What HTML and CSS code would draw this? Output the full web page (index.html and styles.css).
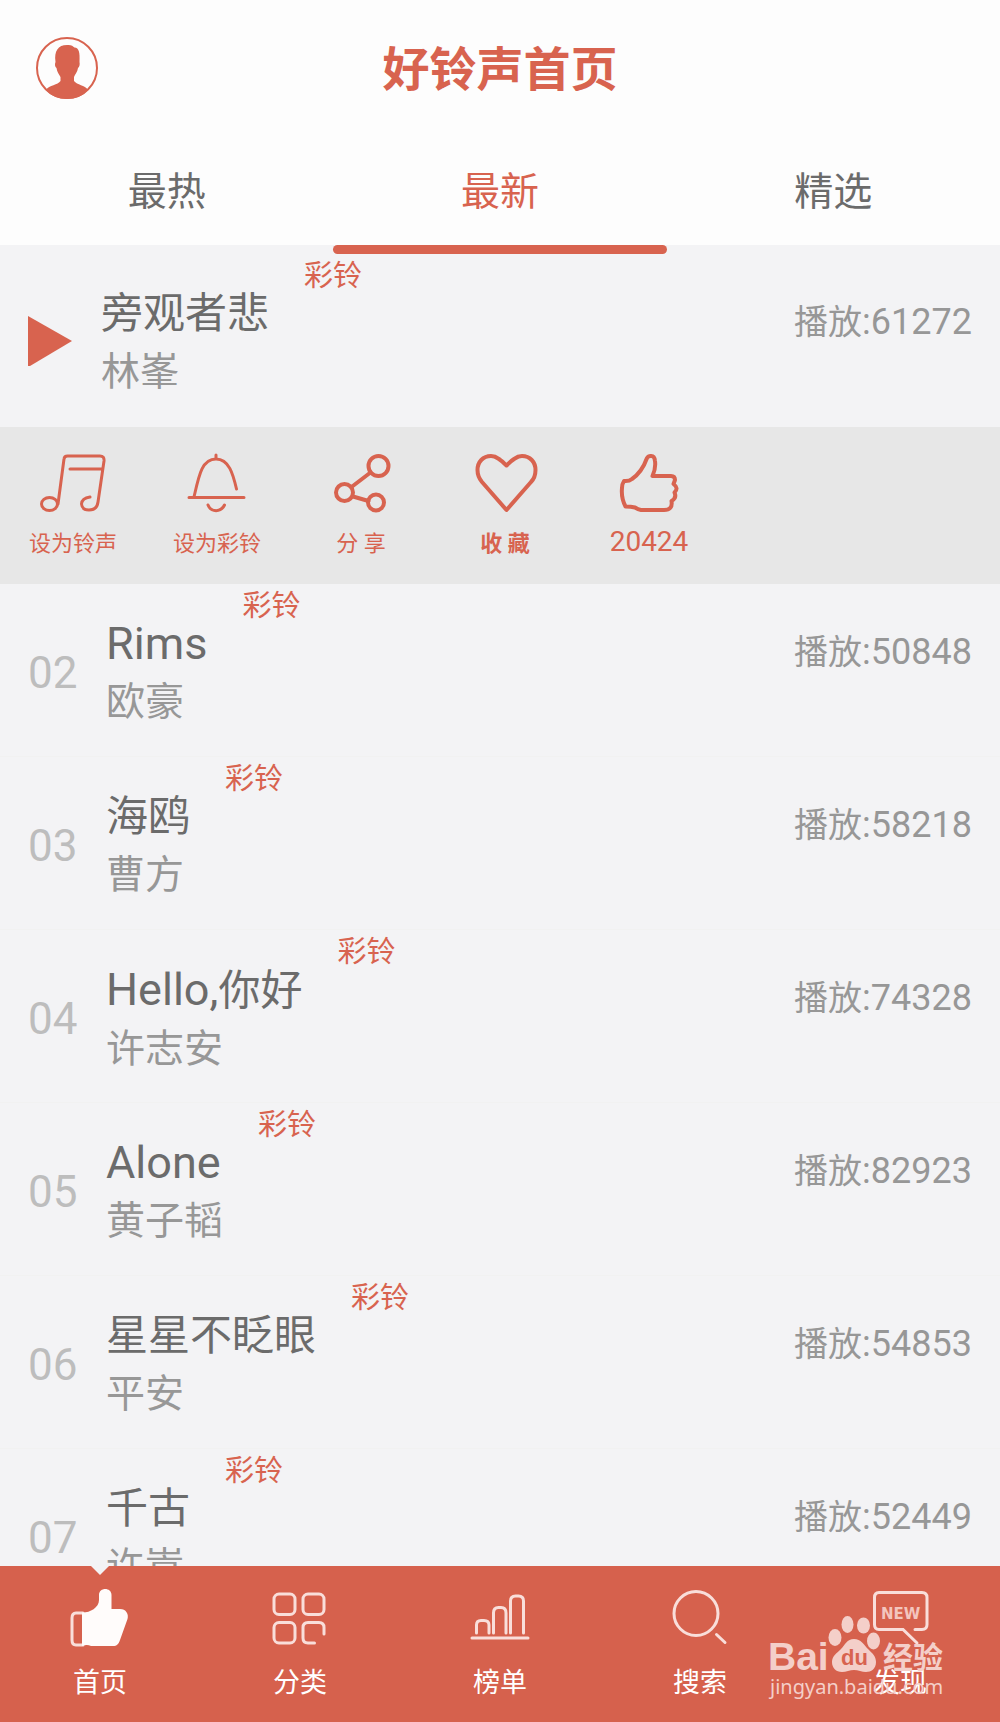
FILE: index.html
```html
<!DOCTYPE html>
<html lang="zh-CN">
<head>
<meta charset="utf-8">
<meta name="viewport" content="width=device-width, initial-scale=1">
<title>好铃声首页</title>
<link rel="stylesheet" href="styles.css">
</head>
<body>
<div class="app">
  <header class="header">
    <button class="avatar" type="button" aria-label="个人中心">
      <svg width="64" height="64" viewBox="0 0 64 64">
        <circle cx="32" cy="32" r="30" fill="none" stroke="currentColor" stroke-width="2"/>
        <path fill="currentColor" d="M32 9C36 8.500 38 10 39.500 11.500C44 12 45 16 44.500 26C45 28 44.500 31 43 32C42.500 36 40 38 39 41V45C42 49 50 49 53 54C48 60 40 63 32 63S16 60 11 54C14 49 23 49 25.500 45V41C24 38 22 36 21.500 32C20 31 19.500 28 20.500 26C19 15 23 9 32 9Z"/>
      </svg>
    </button>
    <h1 class="title">好铃声首页</h1>
  </header>
  <nav class="tabs">
    <a class="tab" href="#hot">最热</a>
    <a class="tab tab-active" href="#new">最新</a>
    <a class="tab" href="#best">精选</a>
  </nav>

  <main class="list">
    <article class="song song-open">
      <button class="play" type="button" aria-label="播放">
        <svg width="44" height="50" viewBox="0 0 44 50"><path fill="currentColor" d="M0 0L44 25L2 50H0Z"/></svg>
      </button>
      <div class="info"><h2 class="name">旁观者悲</h2><p class="singer">林峯</p></div>
      <span class="tag">彩铃</span>
      <span class="plays">播放<span class="count">:61272</span></span>
    </article>

    <div class="actions">
      <button class="action" type="button">
        <svg width="72" height="64" viewBox="0 0 72 64"><ellipse cx="12.500" cy="52" rx="8" ry="6.500"/><path d="M21 52L27 7Q27.300 4 30.500 4H63Q67.500 4 67 9L61 50Q60 58 52 58Q45 58 44.500 52Q45 46 53 45M33 17H65"/></svg>
        <span class="caption">设为铃声</span>
      </button>
      <button class="action" type="button">
        <svg width="72" height="64" viewBox="0 0 72 64"><path d="M13 45C18 23 21 7 35 7C48 7 52 22 55.500 37M8 45.500H63M27 53C30 60.500 40 60.500 43.500 53M35 3V7"/></svg>
        <span class="caption">设为彩铃</span>
      </button>
      <button class="action" type="button">
        <svg class="bold-icon" width="72" height="64" viewBox="0 0 72 64"><circle cx="53.500" cy="14" r="10"/><circle cx="19.500" cy="40.500" r="8.500"/><circle cx="51" cy="50.500" r="8"/><path d="M26.500 35L45.500 20.500M28 44.500L43.500 49"/></svg>
        <span class="caption">分 享</span>
      </button>
      <button class="action" type="button">
        <svg class="bold-icon" width="72" height="64" viewBox="0 0 72 64"><path d="M37.500 13.500C33 9 28 4 22 4C14 4 8.500 10 8.500 18C8.500 23 10.500 27 13 30L37.500 58L62 30C65 27 66.500 23 66.500 18C66.500 10 61 4 53 4C47 4 42 9 37.500 13.500Z"/></svg>
        <span class="caption caption-strong">收 藏</span>
      </button>
      <button class="action" type="button">
        <svg class="bold-icon" width="72" height="64" viewBox="0 0 72 64"><path d="M11 29Q16 29.500 19 27Q29 20 34 6Q35.500 3.500 38.500 4Q41.500 4 42 9Q43 16 39.500 24H58Q62 24 62 28L60.500 32Q66 36 61.500 40.500Q64 46 58.500 49Q60 58 51 58H28Q25 57.500 22 55.500Q18 54.500 12.500 54.500Q8 46 9 36Q9 32 11 29Z"/></svg>
        <span class="likes">20424</span>
      </button>
    </div>

    <article class="song">
      <span class="rank">02</span>
      <div class="info"><h2 class="name name-latin">Rims</h2><p class="singer">欧豪</p></div>
      <span class="tag">彩铃</span>
      <span class="plays">播放<span class="count">:50848</span></span>
    </article>
    <article class="song">
      <span class="rank">03</span>
      <div class="info"><h2 class="name">海鸥</h2><p class="singer">曹方</p></div>
      <span class="tag">彩铃</span>
      <span class="plays">播放<span class="count">:58218</span></span>
    </article>
    <article class="song">
      <span class="rank">04</span>
      <div class="info"><h2 class="name"><span class="name-latin">Hello,</span>你好</h2><p class="singer">许志安</p></div>
      <span class="tag">彩铃</span>
      <span class="plays">播放<span class="count">:74328</span></span>
    </article>
    <article class="song">
      <span class="rank">05</span>
      <div class="info"><h2 class="name name-latin">Alone</h2><p class="singer">黄子韬</p></div>
      <span class="tag">彩铃</span>
      <span class="plays">播放<span class="count">:82923</span></span>
    </article>
    <article class="song">
      <span class="rank">06</span>
      <div class="info"><h2 class="name">星星不眨眼</h2><p class="singer">平安</p></div>
      <span class="tag">彩铃</span>
      <span class="plays">播放<span class="count">:54853</span></span>
    </article>
    <article class="song">
      <span class="rank">07</span>
      <div class="info"><h2 class="name">千古</h2><p class="singer">许嵩</p></div>
      <span class="tag">彩铃</span>
      <span class="plays">播放<span class="count">:52449</span></span>
    </article>
  </main>

  <nav class="bottom">
    <a class="item item-active" href="#home">
      <svg width="72" height="64" viewBox="0 0 72 64"><path d="M19 29H12Q8 29 8 34V56Q8 61 12 61H19"/><path class="solid" d="M18 28.500C25 29 35 24 35 16V11C35 3 47.500 3 47.500 11V25H56C62 25 65 30 63.500 35L56 56C54.500 60 53 62 49 62H27Q23 60 18 62Z"/></svg>
      <span>首页</span>
    </a>
    <a class="item" href="#category">
      <svg width="72" height="64" viewBox="0 0 72 64"><rect x="10" y="10" width="21" height="20.500" rx="5"/><rect x="39" y="10" width="21" height="20.500" rx="5"/><rect x="10" y="38.500" width="21" height="20.500" rx="5"/><path d="M60 50V43.500Q60 38.500 55 38.500H44Q39 38.500 39 43.500V54Q39 59 44 59H50.500"/></svg>
      <span>分类</span>
    </a>
    <a class="item" href="#rank">
      <svg width="72" height="64" viewBox="0 0 72 64"><path d="M8 54H64M12.500 49V41Q12.500 36.500 17 36.500H20Q25 36.500 25 41V49M29.500 49V29Q29.500 23.500 34.500 23.500H37Q42 23.500 42 29V49M46.500 49V17Q46.500 12 51.500 12H54.500Q59.500 12 59.500 17V49"/></svg>
      <span>榜单</span>
    </a>
    <a class="item" href="#search">
      <svg width="72" height="64" viewBox="0 0 72 64"><circle cx="32" cy="29.500" r="22"/><path d="M52.500 50.500L61 58.500"/></svg>
      <span>搜索</span>
    </a>
    <a class="item" href="#discover">
      <svg width="72" height="64" viewBox="0 0 72 64"><path d="M51 45.500H58Q63 45.500 63 40.500V13.500Q63 8.500 58 8.500H15Q10.500 8.500 10.500 13.500V40.500Q10.500 45.500 15 45.500H39L53 59"/><text class="new-text" x="17" y="35">NEW</text></svg>
      <span>发现</span>
    </a>
    <svg class="watermark" width="190" height="92" viewBox="0 0 190 92">
      <text class="wm-bai" x="0" y="58">Bai</text>
      <ellipse cx="67" cy="25.500" rx="6.500" ry="8.500"/>
      <ellipse cx="79.500" cy="12.500" rx="6" ry="8.500"/>
      <ellipse cx="95.500" cy="13.500" rx="6.500" ry="8"/>
      <ellipse cx="105.500" cy="29" rx="6.500" ry="8.500"/>
      <path d="M86 27C93 27 96 33 100 37C104 41 108 44 108 50C108 57 103 60 98 60C94 60 90 58 86 58S78 60 74 60C68 60 64 56 64 50C64 44 69 41 73 37C77 33 79 27 86 27Z"/>
      <text class="wm-du" x="73" y="53">du</text>
      <text class="wm-cn" x="115" y="56">经验</text>
      <text class="wm-url" x="2" y="82">jingyan.baidu.com</text>
    </svg>
  </nav>
</div>
</body>
</html>
```
FILE: styles.css
```css
:root {
  --accent: #d8634f;
  --page: #f3f3f5;
}

* {
  box-sizing: border-box;
  margin: 0;
  padding: 0;
}

body {
  background: var(--page);
  font-family: Roboto, "Noto Sans CJK SC", sans-serif;
  color: #6b6b6b;
}

button {
  border: 0;
  background: none;
  color: var(--accent);
  font: inherit;
}

a {
  color: inherit;
  text-decoration: none;
}

svg {
  display: block;
}

.app {
  display: flex;
  flex-direction: column;
  height: 100vh;
}

.header {
  display: grid;
  grid-template-columns: 64px 1fr 64px;
  align-items: center;
  padding: 0 35px;
  height: 136px;
  background: #fdfdfd;
}

.title {
  padding-top: 3px;
  color: var(--accent);
  font-size: 47px;
  font-weight: 700;
  line-height: 60px;
  text-align: center;
}

.tabs {
  display: flex;
  height: 118px;
  background: linear-gradient(#fdfdfd 109px, var(--page) 109px);
}

.tab {
  flex: 1;
  border-bottom: 9px solid transparent;
  font-size: 39px;
  line-height: 112px;
  text-align: center;
}

.tab-active {
  position: relative;
  color: var(--accent);
}

.tab-active::after {
  content: "";
  position: absolute;
  right: 0;
  bottom: -9px;
  left: 0;
  height: 9px;
  border-radius: 5px;
  background: var(--accent);
}

.list {
  flex: 1;
  min-height: 0;
  overflow-y: auto;
  scrollbar-width: none;
}

.song {
  display: flex;
  align-items: flex-start;
  height: 173px;
  padding: 0 28px;
  border-bottom: 1px solid #f1f1f1;
}

.song-open {
  border-bottom: 0;
}

.rank,
.play {
  flex: none;
  align-self: center;
  width: 78px;
}

.play {
  width: 73px;
}

.rank {
  padding-top: 6px;
  color: #bdbdbd;
  font-size: 44px;
}

.info {
  padding-top: 31px;
}

.name {
  font-size: 42px;
  font-weight: 400;
  line-height: 58px;
}

.name-latin {
  font-size: 45px;
}

.singer {
  color: #979797;
  font-size: 39px;
  line-height: 58px;
}

.tag {
  margin-left: 35px;
  color: var(--accent);
  font-size: 29px;
  line-height: 44px;
}

.plays {
  margin-left: auto;
  padding-top: 47px;
  color: #979797;
  font-size: 34px;
  line-height: 42px;
}

.count {
  font-size: 36px;
}

.actions {
  display: flex;
  height: 157px;
  padding: 25px 0 0 1px;
  background: #e7e7e7;
}

.action {
  display: flex;
  flex-direction: column;
  align-items: center;
  width: 144px;
}

.action svg {
  fill: none;
  stroke: currentColor;
  stroke-width: 3;
  stroke-linecap: round;
  stroke-linejoin: round;
}

.action .bold-icon {
  stroke-width: 4;
}

.caption {
  margin-top: 11px;
  font-size: 22px;
  line-height: 34px;
}

.caption-strong {
  font-weight: 700;
}

.likes {
  margin-top: 9px;
  font-size: 28px;
  line-height: 34px;
}

.bottom {
  position: relative;
  display: flex;
  height: 156px;
  background: #d6614d;
  color: #fff;
}

.item {
  position: relative;
  display: flex;
  flex: 1;
  flex-direction: column;
  align-items: center;
  padding-top: 18px;
  font-size: 27px;
  line-height: 40px;
}

.item svg {
  margin-bottom: 15px;
  fill: none;
  stroke: #f9deda;
  stroke-width: 3;
  stroke-linecap: round;
}

.item .solid {
  fill: #fffcfb;
  stroke: none;
}

.item-active::before {
  content: "";
  position: absolute;
  top: 0;
  border: solid transparent;
  border-width: 9px 9px 0;
  border-top-color: var(--page);
}

.item .new-text {
  fill: #f3c5be;
  stroke: none;
  font: bold 15px "DejaVu Sans", sans-serif;
}

.watermark {
  position: absolute;
  right: 42px;
  bottom: 18px;
  fill: #f4cfc9;
  pointer-events: none;
}

.wm-bai {
  font: bold 39px "Liberation Sans", sans-serif;
}

.wm-du {
  fill: var(--accent);
  font: bold 22px "Liberation Sans", sans-serif;
}

.wm-cn {
  font: bold 30px "Noto Sans CJK SC", sans-serif;
}

.wm-url {
  font: 20px "Noto Sans", sans-serif;
}
```
